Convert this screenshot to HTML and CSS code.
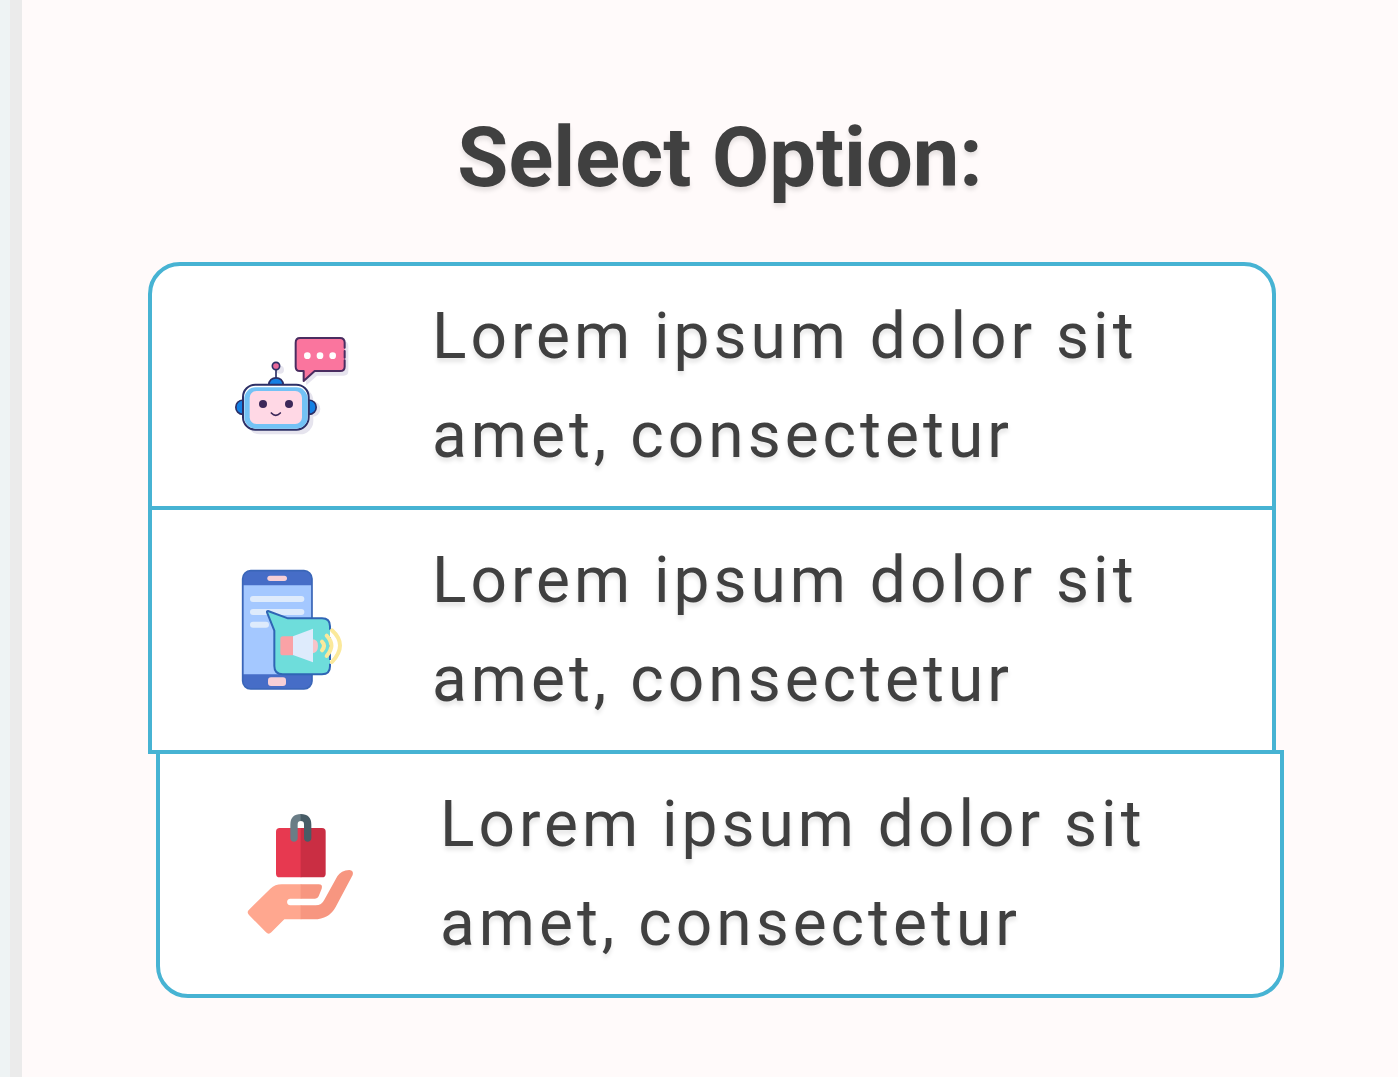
FILE: index.html
```html
<!DOCTYPE html>
<html lang="en">
<head>
  <meta charset="UTF-8">
  <meta name="viewport" content="width=device-width, initial-scale=1.0">
  <title>Select Option</title>
  <link rel="stylesheet" href="styles.css">
</head>
<body>

  <main class="content">
    <h1>Select Option:</h1>

    <div class="options">
      <!-- Chat bot -->
      <button type="button" class="option">
        <svg class="option-icon" viewBox="36 3 360 360" aria-hidden="true">
          <g fill="#e6e4ee">
            <path d="M245 48h124q16 0 16 16v74q0 14-14 14h-80l-32 29z"/>
            <rect x="80" y="188" width="200" height="140" rx="40"/>
            <circle cx="278" cy="252" r="23"/>
            <circle cx="180" cy="134" r="12"/>
          </g>
          <path d="M240 39h120q14 0 14 14v72q0 13-14 13h-76l-33 30v-30h-11q-13 0-13-13V53q0-14 13-14z" fill="#fa759e"/>
          <path d="M374 68V53q0-14-14-14H240q-13 0-13 14v72q0 13 13 13h11v30l33-30h76q14 0 14-13v-19M374 78v20" fill="none" stroke="#4a2c60" stroke-width="6" stroke-linejoin="round" stroke-linecap="round"/>
          <g fill="#fff">
            <circle cx="262" cy="92" r="10"/>
            <circle cx="300" cy="92" r="10"/>
            <circle cx="338" cy="92" r="10"/>
          </g>
          <g stroke="#2c2f66" stroke-width="5">
            <path d="M168 135v24"/>
            <circle cx="168" cy="123" r="11" fill="#e8699a"/>
            <path d="M146 181c0-30 44-30 44 0z" fill="#1580e4"/>
            <path d="M70 225c-30 0-30 43 0 43zM266 225c30 0 30 43 0 43z" fill="#1580e4"/>
            <rect x="69" y="179" width="197" height="135" rx="37" fill="#fff" stroke-width="6"/>
          </g>
          <rect x="73" y="187" width="190" height="124" rx="34" fill="#73c2f5"/>
          <rect x="89" y="198" width="157" height="99" rx="20" fill="#ffd8e5"/>
          <circle cx="129" cy="237" r="12" fill="#3c2859"/>
          <circle cx="207" cy="237" r="12" fill="#3c2859"/>
          <path d="M154 264q13 14 27 0" fill="none" stroke="#3c2859" stroke-width="5" stroke-linecap="round"/>
        </svg>
        <span class="option-text">Lorem ipsum dolor sit amet, consectetur</span>
      </button>

      <!-- Phone with megaphone -->
      <button type="button" class="option">
        <svg class="option-icon" viewBox="6 30 360 360" aria-hidden="true">
          <rect x="38" y="32" width="208" height="355" rx="24" fill="#466dc7"/>
          <path d="M40 76h205v267H40z" fill="#a4c8ff"/>
          <rect x="38" y="32" width="208" height="355" rx="24" fill="none" stroke="#3a66b8" stroke-width="5"/>
          <rect x="112" y="47" width="59" height="16" rx="8" fill="#f7cfd6"/>
          <rect x="114" y="352" width="54" height="26" rx="9" fill="#f7cfd6"/>
          <g fill="#deebfc">
            <rect x="60" y="108" width="163" height="18" rx="9"/>
            <rect x="60" y="147" width="163" height="18" rx="9"/>
            <rect x="60" y="185" width="57" height="18" rx="9"/>
          </g>
          <path d="M114 153l60 22h102q24 0 24 24v120q0 24-24 24H158q-25 0-25-25V212l-22-55q-1-4 3-4z" fill="#6edddb"/>
          <path d="M300 209v-10q0-24-24-24H174l-60-22q-4 0-3 4l22 55v106q0 25 25 25h118q24 0 24-24v-8M300 232v68" fill="none" stroke="#2f65b5" stroke-width="6" stroke-linejoin="round"/>
          <path d="M248 238q16 0 16 20t-16 22z" fill="#f7c4c9"/>
          <path d="M189 229h-30q-8 0-8 8v41q0 8 8 8h30z" fill="#faa2a6"/>
          <path d="M189 229l60-23v101l-60-22z" fill="#deebfc"/>
          <g fill="none" stroke="#fbe99b" stroke-width="12" stroke-linecap="round">
            <path d="M276 245q12 12 0 26"/>
            <path d="M290 227q28 29 0 61"/>
            <path d="M306 211q48 44 0 95"/>
          </g>
        </svg>
        <span class="option-text">Lorem ipsum dolor sit amet, consectetur</span>
      </button>

      <!-- Shopping bag on hand -->
      <button type="button" class="option">
        <svg class="option-icon" viewBox="15 27 360 360" aria-hidden="true">
          <path d="M199 69h-65q-11 0-11 11v126q0 11 11 11h65z" fill="#e73950"/>
          <path d="M197 69h64q11 0 11 11v126q0 11-11 11h-64z" fill="#ca2e43"/>
          <path d="M198 27q-32 0-32 32v41c0 14 22 14 22 0V58q0-10 10-10z" fill="#6a7d86"/>
          <path d="M197 27q32 0 32 32v41c0 14-22 14-22 0V58q0-10-10-10z" fill="#475c66"/>
          <path d="M199 238h-59q-20 0-34 13l-64 63q-8 8 0 16l51 52q8 8 16 0l39-39h51v-42h-33c-13 0-13-20 0-20h33z" fill="#ffa78f"/>
          <path d="M197 238h54q13 0 9 13l-9 23q-3 7-11 7h-43zM197 301h45q18 0 26-17l39-70q11-18 36-19 14 1 10 15l-51 96q-20 37-65 37h-40z" fill="#f79680"/>
        </svg>
        <span class="option-text">Lorem ipsum dolor sit amet, consectetur</span>
      </button>
    </div>
  </main>

</body>
</html>
```
FILE: styles.css
```css
* {
  box-sizing: border-box;
}

body {
  margin: 0;
  min-height: 100vh;
  border-left: 10px solid #eef3f4;
  background: #fffafa;
  color: #404040;
  font-family: Roboto, sans-serif;
}

.content {
  min-height: 100vh;
  padding: 110px 114px 80px 126px;
  border-left: 12px solid #ebebeb;
}

h1 {
  margin: 0 0 56px;
  padding-left: 8px;
  font-size: 83px;
  line-height: 96px;
  font-weight: bold;
  text-align: center;
  text-shadow: 0 4px 4px rgba(0, 0, 0, 0.1);
}

.options {
  display: flex;
  flex-direction: column;
}

.option {
  display: flex;
  align-items: center;
  gap: 80px;
  margin: 0 8px 0 0;
  padding: 21px 40px 21px 80px;
  border: 4px solid #47b3d3;
  background: #fff;
  color: inherit;
  font-family: inherit;
  font-size: 64px;
  line-height: 99px;
  letter-spacing: 4px;
  text-align: left;
  text-shadow: 0 4px 4px rgba(0, 0, 0, 0.1);
  cursor: pointer;
}

.option + .option {
  margin-top: -4px;
}

.option:first-child {
  border-radius: 32px 32px 0 0;
}

.option:last-child {
  margin-left: 8px;
  margin-right: 0;
  border-radius: 0 0 32px 32px;
}

.option:hover {
  background: #f3fbfe;
}

.option-icon {
  flex: none;
  width: 120px;
  height: 120px;
  overflow: visible;
}

.option-text {
  flex: 1;
}
```
